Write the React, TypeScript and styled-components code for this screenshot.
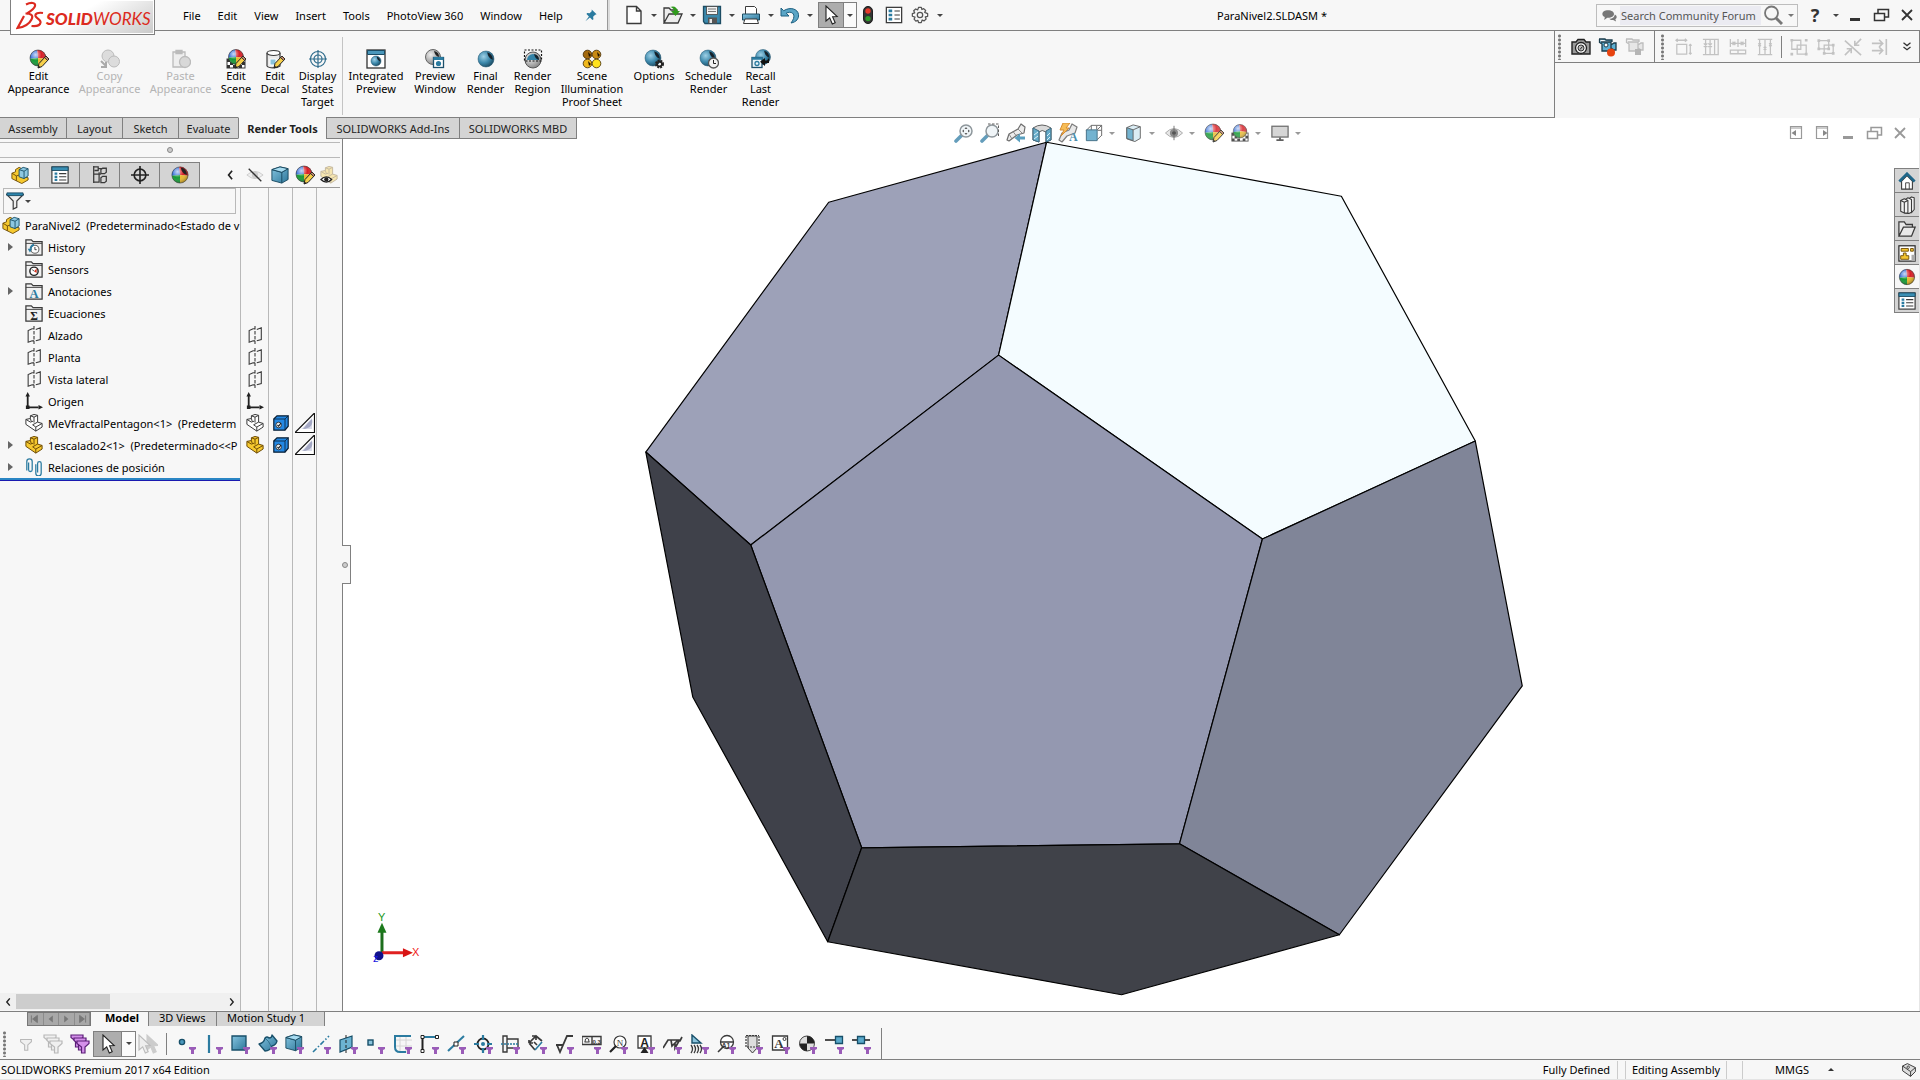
import React from 'react';
import styled, { createGlobalStyle, css } from 'styled-components';

const GlobalStyle = createGlobalStyle`
  * { box-sizing: border-box; }
  body { margin: 0; background: #f7f7f7; }
  body, button, input { font-family: "Noto Sans", "Open Sans", sans-serif; font-size: 11px; color: #000; }
  button { margin: 0; padding: 0; border: 0; background: none; white-space: nowrap; }
  ul { margin: 0; padding: 0; list-style: none; }
  svg { display: block; flex: none; }
`;

const line = '#808080';
const softLine = '#b9b9b9';
const face = '#f7f7f7';
const tabFace = '#d4d4d4';

/* ---------- icons ---------- */

const D = '#3a3a3a';
const B = '#2b7ba0';
const G = '#c2c2c2';

const Ball = ({ cx = 10, cy = 10, r = 8 }: { cx?: number; cy?: number; r?: number }) => (
  <g>
    <path d={`M${cx} ${cy}L${cx - r * 0.1} ${cy - r}A${r} ${r} 0 0 0 ${cx - r} ${cy + r * 0.1}Z`} fill="#2f6bd8" />
    <path d={`M${cx} ${cy}L${cx - r * 0.1} ${cy - r}A${r} ${r} 0 0 1 ${cx + r} ${cy + r * 0.1}Z`} fill="#d81f26" />
    <path d={`M${cx} ${cy}L${cx - r} ${cy + r * 0.1}A${r} ${r} 0 0 0 ${cx} ${cy + r}Z`} fill="#169a36" />
    <path d={`M${cx} ${cy}L${cx + r} ${cy + r * 0.1}A${r} ${r} 0 0 1 ${cx} ${cy + r}Z`} fill="#e9b92c" />
    <circle cx={cx} cy={cy} r={r} fill="url(#gloss)" stroke="#333" strokeWidth=".6" />
  </g>
);
const BlueBall = ({ cx = 10, cy = 10, r = 8 }: { cx?: number; cy?: number; r?: number }) => (
  <g>
    <circle cx={cx} cy={cy} r={r} fill="url(#blueBall)" stroke="#1d516c" strokeWidth=".5" />
    <path d={`M${cx + r * 0.15} ${cy - r * 0.85}Q${cx + r * 0.8} ${cy - r * 0.7} ${cx + r * 0.85} ${cy + r * 0.1}Q${cx + r * 0.25} ${cy - r * 0.1} ${cx + r * 0.15} ${cy - r * 0.85}z`} fill="#16222b" />
  </g>
);
const Pencil = () => (
  <g>
    <path d="M9 19l1-4.5 7-7.5 3 3-7 7.5z" fill="#f6cf4a" stroke="#222" strokeWidth="1" />
    <path d="M17 7l3 3-1.5 1.5-3-3z" fill="#b9856a" stroke="#222" strokeWidth=".8" />
    <path d="M9 19l.6-2.4 1.8 1.7z" fill="#222" />
  </g>
);
const Folder = ({ children }: { children?: React.ReactNode }) => (
  <g>
    <path d="M1 19V2h6l2 2h10v15z" fill="#f1f1f1" stroke={D} strokeWidth="1.4" />
    <path d="M1 6h18" stroke={D} strokeWidth="1" />
    {children}
  </g>
);
const PartShape = ({ fill = '#f6c92f', stroke = '#6d4b05' }: { fill?: string; stroke?: string }) => (
  <g fill={fill} stroke={stroke} strokeWidth="1.1" strokeLinejoin="round">
    <path d="M1 6l5-1V2l4-1.500 4 1V9l5 1.500v4L12 19 1 11.500z" />
    <path d="M1 6l5 3 3-1M6 2l4 1.500 4-2M10 3.500v6M6 5l1 3.500M12 19v-4.500l7-4M12 14.500L8.500 12l5.500-3" fill="none" />
  </g>
);
const AsmShape = () => (
  <g strokeLinejoin="round">
    <path d="M1 8l4-1.500V4l4-2.500 3 1.500v9l7 1v2.500L12 19.500 1 14z" fill="#f6c92f" stroke="#6d4b05" />
    <path d="M1 8l5 3v5.500M6 11l3-1" fill="none" stroke="#6d4b05" />
    <path d="M9 4l4.500-2.500L19 3v8l-4.500 3L9 12z" fill="#8ec8e2" stroke="#174f69" />
    <path d="M9 4l5.500 1.800L19 3M14.500 5.800V14" fill="none" stroke="#174f69" />
  </g>
);
const Cube = ({ tone = 'url(#blueFace)' }: { tone?: string }) => (
  <g stroke="#15455c" strokeLinejoin="round">
    <path d="M1 4l9-3 9 2v12l-7 4-11-3z" fill={tone} />
    <path d="M1 4l11 3 7-4M12 7v12" fill="none" />
    <path d="M1 4l9-3 9 2-7 4z" fill="#a7dbf0" />
  </g>
);
const Cursor = ({ fill = '#fff', stroke = '#222' }: { fill?: string; stroke?: string }) => (
  <path d="M5 1v15l3.700-3.200L11.300 19l2.900-1.200-2.600-6 4.600-.3z" fill={fill} stroke={stroke} strokeWidth="1.100" />
);
const Funnel = () => <path d="M12 13h7v2l-2 1v4h-3v-4l-2-1z" fill="#9a5cb8" />;
const BigFunnel = ({ x = 0, y = 0, fill = '#f0f0f0', stroke = '#b8b8b8' }) => (
  <path transform={`translate(${x} ${y})`} d="M1 1h12v2.500L9 7v6H5.500V7L1 3.500z" fill={fill} stroke={stroke} strokeWidth="1.200" />
);
const Plane = () => (
  <g fill="none" stroke={D}>
    <path d="M8 3L3.500 5v13L8 16.500M8 3h2M12 4l5-2v13l-5 1.500M8 16.500h2" strokeWidth="1.200" />
    <path d="M10 0v20" strokeDasharray="4 1.500" strokeWidth="1.200" />
  </g>
);
const VideoBody = ({ c, s }: { c: string; s: string }) => (
  <path d="M1 2h6l1 1h6v2M3 5h10v9H4V7L1.500 5.500V2M13 8l3-2h2v7h-2l-3-2z" fill={c} stroke={s} strokeWidth="1.300" />
);
const Lens = () => (
  <g>
    <path d="M2 18l6-6" stroke="#4a8db0" strokeWidth="3.600" strokeLinecap="round" />
    <circle cx="12" cy="8" r="6" fill="#eef4f7" stroke="#7b858b" strokeWidth="1.500" />
  </g>
);
const ListShape = () => (
  <g>
    <rect x="1.500" y="1.500" width="17" height="17" fill="#fff" stroke={D} strokeWidth="1.400" />
    <path d="M4 5.500h4M4 10h4M4 14.500h4" stroke={B} strokeWidth="3" />
    <path d="M10.500 5.500h6M10.500 10h6M10.500 14.500h6" stroke={D} strokeWidth="1.200" />
  </g>
);
const Checker = () => (
  <g>
    <rect x="1" y="10" width="18" height="9" fill="#fff" stroke={D} />
    <path d="M1 10h3v3H1zM4 13h3v3H4zM1 16h3v3H1zM7 16h3v3H7zM13 16h3v3h-3zM16 13h3v3h-3zM13 10h3v3h-3z" fill="#333" />
  </g>
);

const icons: Record<string, React.ReactNode> = {
  pin: <path d="M11 2l7 7-2 .5-3 3 .5 3.500-1.500 1-3.500-3.500L2 19l5-7-3.500-3.500 1-1.500 3.500.5 3-3z" fill={B} />,
  newDoc: <path d="M3 1.500h9.500l4.500 4.500v12.500H3zM12.500 1.500V6H17" fill="#fdfdfd" stroke={D} strokeWidth="1.400" />,
  open: (
    <g>
      <path d="M1 18V3h5l2 2h6v4M1 18l5-9h13l-4 9z" fill="#ededed" stroke={D} strokeWidth="1.300" />
      <path d="M7 2c4-1.500 7 0 7.500 4H17l-4.500 5L8 6h3c0-2-1.500-3.500-4-4z" fill="#2f9a1c" />
    </g>
  ),
  save: (
    <g>
      <path d="M1.500 1.500h17v17H3l-1.500-2z" fill="#3b89ac" stroke="#1c4c63" strokeWidth="1.300" />
      <rect x="4.500" y="1.500" width="11" height="8" fill="#f2f2f2" stroke="#444" strokeWidth=".8" />
      <path d="M6 4h8M6 6.500h8" stroke="#777" />
      <path d="M6 12.500h9v6H6z" fill="#555" /><path d="M7.500 14h2.500v4H7.500z" fill="#e7e7e7" />
    </g>
  ),
  print: (
    <g>
      <path d="M4.500 1.500h9l2 2v6h-11z" fill="#fff" stroke={D} />
      <path d="M1.500 9h17v6h-17z" fill="url(#blueFace)" stroke="#1c4c63" />
      <path d="M4 14h12l1.500 4.500h-15z" fill="#fff" stroke={D} />
    </g>
  ),
  undo: <path d="M1 3v8h8L6.200 8.200c5-2.500 9 .3 7.300 5.300-.5 1.800-1.500 3-2.500 4.500 5.500-1 8-4.500 7.500-8.500C17.800 4 10.500 1.500 3.700 5.700z" fill="#5aa5c6" stroke="#1c5f80" strokeWidth="1" />,
  cursor: <Cursor />,
  traffic: (
    <g>
      <rect x="5" y=".5" width="10" height="19" rx="5" fill="#333" stroke="#111" />
      <circle cx="10" cy="5.500" r="3" fill="#e8392a" /><circle cx="10" cy="14" r="3" fill="#2f9c2b" />
    </g>
  ),
  list: <ListShape />,
  gear: (
    <g fill="none" stroke="#555" strokeWidth="1.400">
      <circle cx="10" cy="10" r="3" />
      <path d="M8.500 1.500h3l.6 2.400 2-1 2.200 2-1.100 2.200 3.300 1.400v3l-2.600.7.9 2.200-2.200 2.100-2.200-1-1 3h-3l-.8-2.600-2.200.9-2-2.200 1-2.200-2.900-1v-3l2.600-.8L3 5.300l2.200-2 2.200 1z" strokeLinejoin="round" />
    </g>
  ),
  bubbles: (
    <g fill="#777">
      <path d="M8 3c5 0 8 2.200 8 5s-3 5-8 5l-1-.1L3 16l.7-4C1.500 11 .5 9.800.500 8 .5 5 3.500 3 8 3z" />
      <path d="M17 8.500c3 1 3.500 5 .8 6.500l1 3-4-2c-2.500.3-4-.5-5-1.800 4.500 0 7.200-2.700 7.200-5.700z" />
    </g>
  ),
  magnifier: <g fill="none" stroke="#777"><circle cx="8.500" cy="8" r="6.500" strokeWidth="1.800" /><path d="M13 13l6 6" strokeWidth="3" /></g>,
  minimize: <path d="M5 14.500h10" stroke="currentColor" strokeWidth="3" />,
  restore: <path d="M7 8V4.500h10.500V12H14M3.500 8.500h10v7h-10z" fill="none" stroke="currentColor" strokeWidth="1.500" />,
  close: <path d="M5 5l10 10M15 5L5 15" stroke="currentColor" strokeWidth="1.800" />,
  dockLeft: <g><path d="M4.500 3.500h11v12h-11zM4 5h12" fill="none" stroke="#999" strokeWidth="1.200" /><path d="M10 7v6L5.500 10z" fill="#888" /></g>,
  dockRight: <g><path d="M4.500 3.500h11v12h-11zM4 5h12" fill="none" stroke="#999" strokeWidth="1.200" /><path d="M11 7v6l4.500-3z" fill="#888" /></g>,
  appearance: <g><Ball cx={9} cy={9} /><Pencil /></g>,
  copyAppearance: (
    <g fill="#dcdcdc" stroke="#bbb"><circle cx="8" cy="7" r="6" /><circle cx="14" cy="12.500" r="5.500" /><path d="M1 12l5 5m0-4v5H1" fill="none" stroke="#aaa" strokeWidth="2" /></g>
  ),
  pasteAppearance: <g fill="#eee" stroke="#bbb" strokeWidth="1.300"><path d="M2 3h12v15H2zM5 1.500h6v3H5z" /><circle cx="14" cy="13" r="5.500" fill="#d8d8d8" /></g>,
  scene: <g><Checker /><Ball cx={10} cy={8} r={7.5} /><Pencil /></g>,
  sceneBall: <g><Checker /><Ball cx={10} cy={8} r={7.5} /></g>,
  decal: (
    <g>
      <path d="M2 4v13c2 2.500 10 2.500 13 0V4" fill="#eaeaea" stroke={D} strokeWidth="1.200" />
      <ellipse cx="8.500" cy="4" rx="6.500" ry="2.500" fill="#fff" stroke={D} strokeWidth="1.200" />
      <path d="M5 10h6v6H5z" fill="#8ac3dc" stroke="#fff" /><Pencil />
    </g>
  ),
  target: <g fill="none" stroke="#2f6c8c" strokeWidth="1.200"><circle cx="10" cy="10" r="7.500" /><circle cx="10" cy="10" r="4" /><path d="M10 1v18M1 10h18" /></g>,
  integrated: (
    <g><rect x="1" y="1" width="18" height="18" fill="#fff" stroke="#333" strokeWidth="1.300" /><path d="M1.500 1.500h17v4h-17z" fill="#4a97bb" stroke="#1c4c63" /><BlueBall cy={12} r={5} /></g>
  ),
  previewWin: (
    <g><circle cx="8" cy="8" r="7.500" fill="url(#greyBall)" stroke="#666" /><path d="M9 2a6 6 0 0 1 5 6q-4-1-5-6z" fill="#222" /><rect x="8.500" y="8.500" width="10" height="10" fill="#fff" stroke="#1d516c" strokeWidth="1.300" /><path d="M8.500 9.500h10" stroke="#2b7ba0" strokeWidth="3" /><circle cx="13.500" cy="14.500" r="2.600" fill="#2b7ba0" /></g>
  ),
  blueBall: <BlueBall />,
  region: (
    <g><circle cx="10" cy="11" r="8" fill="url(#greyBall)" stroke="#555" /><path d="M4 11a6 6 0 0 1 12 0z" fill="#3483a7" /><path d="M11 5a6 6 0 0 1 5 6q-4-1-5-6z" fill="#16222b" /><rect x="1.500" y="1" width="17" height="11" fill="none" stroke="#111" strokeDasharray="2 1.500" strokeWidth="1.200" /></g>
  ),
  proof: (
    <g stroke="#3d2600" strokeWidth=".8"><circle cx="5.500" cy="5.500" r="4.300" fill="#a46a0e" /><circle cx="14.500" cy="5.500" r="4.300" fill="#c98a14" /><circle cx="5.500" cy="14.500" r="4.300" fill="#f0b81c" /><circle cx="14.500" cy="14.500" r="4.300" fill="#ffe21f" /><path d="M6 3l3 3-2 2zM15 3l3 3-2 2zM6 12l3 3-2 2z" fill="#221400" stroke="none" /></g>
  ),
  options: <g><BlueBall cx={9} cy={9} /><circle cx="15.500" cy="15" r="3.200" fill="none" stroke="#222" strokeWidth="2.600" strokeDasharray="1.700 .9" /><circle cx="15.500" cy="15" r="2.400" fill="none" stroke="#222" strokeWidth="1.600" /></g>,
  schedule: <g><BlueBall cx={9} cy={9} /><circle cx="14.500" cy="14" r="5" fill="#f2f2f2" stroke="#555" strokeWidth="1.300" /><path d="M14.500 11v3.500H17" fill="none" stroke="#222" /></g>,
  recall: (
    <g><BlueBall cx={12} cy={8} r={7.5} /><rect x="1" y="8.500" width="10" height="10" fill="#eaf4f9" stroke="#1d516c" strokeWidth="1.300" /><path d="M1 9.500h10" stroke={B} strokeWidth="2.500" /><circle cx="6" cy="14.500" r="2" fill="none" stroke={B} strokeWidth="1.300" /><path d="M18 9v5h-4v3l-5-4.200 5-3.800v2.500h2z" fill="#111" /></g>
  ),
  camera: (
    <g><path d="M1 5h4l2-2.500h6L15 5h4v12H1z" fill="#9a9a9a" stroke="#222" strokeWidth="1.400" /><circle cx="10" cy="11" r="5.500" fill="#f4f4f4" stroke="#222" strokeWidth="1.300" /><circle cx="10" cy="11" r="3" fill="#bbb" stroke="#333" /><path d="M9 12.500l2.500-3" stroke="#222" /></g>
  ),
  video: <g><VideoBody c="#5fb0d2" s="#1c3d4c" /><circle cx="8" cy="8" r="2" fill="#fff" stroke="#1c3d4c" /><circle cx="13" cy="15.500" r="4" fill="#e8430f" /></g>,
  videoOff: <g><VideoBody c="#e6e6e6" s="#bdbdbd" /><path d="M10 12h6v6h-6z" fill="#b5b5b5" /></g>,
  al1: <g fill="none" stroke={G} strokeWidth="1.400"><path d="M2 7h11v11H2zM1 2.500h12M3 .8L1 2.500l2 1.700M11 .8l2 1.700-2 1.700M17 7v11M15.500 8.500L17 7l1.500 1.500M15.500 16.500L17 18l1.500-1.500" /></g>,
  al2: <g fill="none" stroke={G} strokeWidth="1.400"><path d="M1 1.500h13v17H1M14 1.500h4v17h-4M4 2v16M9 2v16M2 6l4 4M6 6l-4 4M7 6l4 4M11 6l-4 4" /></g>,
  al3: <g fill="none" stroke={G} strokeWidth="1.400"><path d="M1.500 1v9M18.500 1v9M10 1v9M2 6h16M4 4l3 4M7 4L4 8M13 4l3 4M16 4l-3 4M1.500 13.500h17v4h-17zM10 13.500v4" /></g>,
  al4: <g fill="none" stroke={G} strokeWidth="1.400"><path d="M2 1.500h16M2 18.500h16M4 2v16M10 2v16M16 2v16M2.500 6l3 3M5.500 6l-3 3M8.500 10l3 3M11.500 10l-3 3M14.500 6l3 3M17.500 6l-3 3" /></g>,
  al5: <g fill="none" stroke={G} strokeWidth="1.400"><path d="M2 2.500h10v10H2zM8 8h10v10H8z" /><path d="M.5 1h3v3h-3zM16.500 16.500h3v3h-3zM.5 16.500h3v3h-3zM16.500 1h3v3h-3z" fill={G} stroke="none" /></g>,
  al6: <g fill="none" stroke={G} strokeWidth="1.400"><path d="M2 3h11v9H2zM8 8h10v9H8z" /><path d="M.5 1.500h3v3h-3zM11.500 1.500h3v3h-3zM.5 10.500h3v3h-3zM11.500 10.500h3v3h-3zM16.500 15.500h3v3h-3zM6.500 15.500h3v3h-3zM16.500 6.500h3v3h-3z" fill={G} stroke="none" /></g>,
  al7: <g stroke={G} strokeWidth="1.800" fill="none"><path d="M1 3l18 16M19 1l-7 7M12 3v5h5M1 19l7-7M8 17v-5H3" /></g>,
  al8: <g stroke={G} strokeWidth="1.800" fill="none"><path d="M1 6h12M9 2l4 4-4 4M1 14h12M9 10l4 4-4 4M17 1v18" /></g>,
  more: <path d="M5 4l5 4 5-4M5 10l5 4 5-4" fill="none" stroke="#333" strokeWidth="1.800" />,
  zoomFit: <g><Lens /><path d="M12 4l1.500 2h-3zM12 12l1.500-2h-3zM8 8l2-1.500v3zM16 8l-2-1.500v3z" fill="#444" /></g>,
  zoomArea: <g><Lens /><path d="M8 1h10.500v13" fill="none" stroke="#444" strokeDasharray="2.500 1.500" /></g>,
  prevView: <g strokeLinejoin="round"><path d="M1 17l2-6 9-5 3-5 4 3-1 6-7 2-8 6z" fill="#e9e9e9" stroke="#555" strokeWidth="1.200" /><path d="M12 6l4 4M3 11l3 5M7 8.500l3 4" stroke="#777" /><path d="M19 16.500h-5v3L8.500 15 14 10.500v3h5z" fill="#3d8fb5" /></g>,
  section: <g stroke="#444" strokeLinejoin="round"><path d="M1 5Q10-1 19 5v12l-5 2V9q-4-3-7 0v10l-6-2z" fill="#d4d4d4" /><path d="M1 5l6 3v11l-6-2zM19 5l-5 3v11l5-2z" fill="#4b9dc0" stroke="#1d516c" /><path d="M2 12l4-3M2 16l4-3M15 13l3-3M15 17l3-3" stroke="#d5eef8" /></g>,
  annView: <g strokeLinejoin="round"><path d="M1 17l3-7 7-3 3-6 5 3-2 6-8 3-5 6z" fill="#e4e4e4" stroke="#666" strokeWidth="1.200" /><path d="M12 0H5L2 7h4l-3 6 8-8H8z" fill="#f6b23a" stroke="#cf7a10" /><text x="11" y="18" fontSize="12" fontWeight="700" fill={B} fontFamily="Liberation Serif, serif">A</text></g>,
  orient: <g fill="none" stroke="#444"><path d="M7 1.500h11.500V13M7 1.500v5M18.500 1.500l-5 5M13 2v4M18 7h-4M7 1.500L1.500 7M18.500 12.500l-5 5" /><path d="M1.500 6.500h12v12h-12z" fill="#5ba6c8" stroke="#1d516c" /></g>,
  display: <g stroke="#444" strokeLinejoin="round"><path d="M2 4l7-3 8 2v13l-6 3.500-9-3z" fill="#d5ebf4" /><path d="M2 4l7 2.500v12L2 16z" fill="#5ba6c8" /><path d="M9 6.500L17 3" fill="none" /></g>,
  eye: <g><path d="M.5 10Q10 0 19.500 10 10 20 .5 10z" fill="#e2e2e2" stroke="#999" /><circle cx="10" cy="10" r="4.500" fill="#777" /><circle cx="10" cy="10" r="2" fill="#222" /><path d="M10 2v16" stroke="#555" /></g>,
  monitor: <g><rect x="1" y="2.500" width="18" height="12" fill="#cfcfcf" stroke="#555" strokeWidth="1.400" /><path d="M10 15v3M6 18h8" stroke="#444" strokeWidth="2" /></g>,
  asm: <AsmShape />,
  part: <PartShape />,
  partGrey: <PartShape fill="#fff" stroke="#3a3a3a" />,
  props: <g><rect x="1" y="1" width="18" height="18" fill="#fff" stroke={D} strokeWidth="1.300" /><path d="M1 1h18v4H1z" fill="#3a8fb4" stroke="#1c4c63" /><path d="M4 8.500h3M4 12h3M4 15.500h3" stroke={B} strokeWidth="2.400" /><path d="M9 8.500h8M9 12h8M9 15.500h8" stroke={D} strokeWidth="1.200" /></g>,
  config: <g fill="none" stroke={D} strokeWidth="1.400"><path d="M3 0v19M3 1h5v4H4M8 3h4M3 9h8M3 18h6V7M11 4l2-1.500h4V7l-2 1.500h-4zM11 13l2-1.500h4V17l-2 1.500h-4z" /></g>,
  cross: <g fill="none" stroke="#222" strokeWidth="1.800"><circle cx="10" cy="10" r="6.500" /><path d="M10 0v20M0 10h20" /></g>,
  ball: <g><Ball r={9} /><path d="M11 2c4 0 7 4 6.500 8-4-1-6-4-6.500-8z" fill="#222" /></g>,
  sphere: <Ball r={8.5} />,
  chevronLeft: <path d="M13 4l-5 6 5 6" fill="none" stroke="#222" strokeWidth="2.400" />,
  chevronRight: <path d="M7 4l5 6-5 6" fill="none" stroke="#222" strokeWidth="2.400" />,
  eyeOff: <g><path d="M1 10Q10 2 19 10 10 18 1 10z" fill="#eee" stroke="#c9c9c9" /><circle cx="10" cy="10" r="3.500" fill="#ccc" /><path d="M3 3l14 14" stroke="#333" strokeWidth="1.500" /></g>,
  cube: <Cube />,
  ghost: <g><g opacity=".35"><PartShape /></g><path d="M1 15q6-6 12 0-6 6-12 0z" fill="#fff" stroke="#222" strokeWidth="1.300" /><circle cx="7" cy="15" r="2.400" fill="#222" /></g>,
  filter: <g><path d="M1 3l7 7v9l4-2v-7l7-7z" fill="#eee" stroke={D} strokeWidth="1.300" /><path d="M1 1h18v3H1z" fill="#2d86ad" stroke="#1c4c63" /></g>,
  history: <Folder><circle cx="11" cy="12.500" r="4.500" fill="#fff" stroke="#666" strokeWidth="1.200" /><path d="M11 10v3h2" fill="none" stroke="#333" /><path d="M3 12h5l-2.500 4z" fill={B} /><path d="M6 12q1-4 4-4.500" fill="none" stroke={B} strokeWidth="2" /></Folder>,
  sensors: <Folder><circle cx="10" cy="12.500" r="4.600" fill="#fff" stroke="#222" strokeWidth="1.600" /><path d="M10 12.500l3-3v5z" fill="#d8321f" /><path d="M10 12.500l-2-2" stroke="#222" /></Folder>,
  annotations: <Folder><text x="10" y="17.500" fontSize="14" fontWeight="700" textAnchor="middle" fill={B} fontFamily="Liberation Serif, serif">A</text></Folder>,
  equations: <Folder><text x="10" y="17.500" fontSize="13" fontWeight="700" textAnchor="middle" fill="#222" fontFamily="Liberation Serif, serif">Σ</text></Folder>,
  plane: <Plane />,
  origin: <g fill="#222"><path d="M3 4v13h12" fill="none" stroke="#222" strokeWidth="2" /><path d="M3 0l2.500 5h-5zM20 17l-5 2.500v-5zM1 15h4v4H1z" /></g>,
  mates: <g fill="none" stroke={B} strokeWidth="1.400"><path d="M2 14V4a3 3 0 0 1 6 0v9a2 2 0 0 1-4 0V5M12 7v10a3 3 0 0 0 6 0V6a2 2 0 0 0-4 0v10" /></g>,
  dispCube: <g><path d="M1 5l4-4h14v13l-4 5H1z" fill="#2288e4" stroke="#0a1f33" strokeWidth="1.500" /><path d="M1 5h14v14M15 5l4-4" fill="none" stroke="#0a1f33" /><circle cx="7" cy="12.500" r="3.500" fill="#dfe8ef" stroke="#222" /><path d="M5.500 12.500l1.500 1.500 3-4" fill="none" stroke="#111" strokeWidth="1.300" /></g>,
  corner: <g><path d="M19 1v18H1z" fill="#fff" /><path d="M17 5v11H6q1.500-1 2.500-2z" fill="#d9dbe8" /><path d="M17 6q2 9-9 10c2-2 6-8 9-10z" fill="#a4a8c4" /><path d="M19.500 0v19.500H0z" fill="none" stroke="#111" strokeWidth="1.200" /></g>,
  home: <g><path d="M4 10v9h12v-9l-6-6z" fill="#fff" stroke={D} strokeWidth="1.200" /><path d="M1.500 10.500L10 2l8.500 8.500" fill="none" stroke="#1f6689" strokeWidth="3" /><path d="M8.500 19v-7h4v7" fill="none" stroke={D} /></g>,
  books: <g fill="#f4f4f4" stroke={D} strokeWidth="1.200" strokeLinejoin="round"><path d="M12 3l3-2 3 1v13l-3 3.500-3-1z" /><path d="M8 4l3-2 4 2v14l-3 1.500-4-1z" /><path d="M3 5l4-2 4 2v14L7 19l-4-2z" /><path d="M3 5l4 2v12M7 7l4-2" fill="none" /></g>,
  folderOpen: <path d="M1 18V2h6l2 3h7v3M1 18L6 8h13l-4 10z" fill="#e9e9e9" stroke={D} strokeWidth="1.400" />,
  palette: <g><rect x="1" y="2" width="18" height="17" fill="#fff" stroke="#222" strokeWidth="1.300" /><path d="M3.500 5h8v3h-8zM14 5h3v3h-3zM6 10h3v3h3v4H3v-4h3z" fill="#f4c530" stroke="#6d4b05" /><path d="M15 12h4v7h-4z" fill="#aaa" /></g>,
  first: <path d="M4 4v12M14 4v12L6 10z" fill="#777" stroke="#777" strokeWidth="1.500" />,
  back: <path d="M13 4v12L6 10z" fill="#777" />,
  forward: <path d="M7 4v12l7-6z" fill="#777" />,
  last: <path d="M16 4v12M6 4v12l8-6z" fill="#777" stroke="#777" strokeWidth="1.500" />,
  filterOne: <BigFunnel x={3} y={4} />,
  filterMany: <g><BigFunnel x={0} y={0} /><BigFunnel x={3} y={3} /><BigFunnel x={6} y={6} /></g>,
  filterOn: <g><BigFunnel x={0} y={0} fill="#d490ea" stroke="#5c1f78" /><BigFunnel x={3} y={3} fill="#d490ea" stroke="#5c1f78" /><BigFunnel x={6} y={6} fill="#d490ea" stroke="#5c1f78" /></g>,
  cursorOff: <g><g transform="translate(4 0)"><Cursor fill="#ccc" stroke="#ccc" /></g><g transform="translate(-4 0)"><Cursor fill="#eee" stroke="#bbb" /></g></g>,
  fPoint: <g><circle cx="5" cy="8" r="2.600" fill="#4a98bd" stroke="#174f69" strokeWidth="1.400" /><Funnel /></g>,
  fEdge: <g><path d="M5 1v18" stroke={B} strokeWidth="2.200" /><Funnel /></g>,
  fFace: <g><path d="M1 2h14v14H1z" fill="url(#blueFace)" stroke="#174f69" strokeWidth="1.300" /><Funnel /></g>,
  fSurf: <g strokeLinejoin="round"><path d="M1 10q5-1 6-6 2-2 4 0 3 0 3-3l5 6q-1 4-5 5-2 5-7 5z" fill="url(#blueFace)" stroke="#174f69" strokeWidth="1.300" /><path d="M7 4q4 3 6 8" fill="none" stroke="#174f69" strokeWidth=".6" /><Funnel /></g>,
  fBody: <g><g transform="scale(.88)"><Cube /></g><Funnel /></g>,
  fAxis: <g><path d="M1 18L17 2" stroke={B} strokeWidth="1.600" strokeDasharray="5 2 1.500 2" /><Funnel /></g>,
  fPlane: <g><path d="M1 6l12-4v11L1 18z" fill="#6cb3d2" stroke="#174f69" strokeWidth="1.200" /><path d="M7 1v19" stroke="#222" strokeDasharray="3 2" /><Funnel /></g>,
  fSketchPt: <g><rect x="2" y="6" width="5" height="5" fill="#8ac3dc" stroke="#174f69" strokeWidth="1.400" /><Funnel /></g>,
  fSketch: <g><path d="M1 6h18M1 12h18M7 1v18M13 1v18" stroke="#d4d4d4" /><path d="M18 2H2v11q0 5 5 5h6" fill="none" stroke={B} strokeWidth="2" /><Funnel /></g>,
  fSeg: <g><path d="M2.500 4v13" stroke="#222" strokeWidth="2" /><path d="M3 3h14" stroke={B} strokeWidth="2" /><g fill="#fff" stroke="#222"><path d="M1 1.500h3v3H1zM15.500 1.500h3v3h-3zM1 15.500h3v3H1z" /></g><Funnel /></g>,
  fMid: <g><path d="M1 17L17 2" stroke={B} strokeWidth="2" /><path d="M7 8h4v4H7z" fill="#fff" stroke="#222" /><Funnel /></g>,
  fCenter: <g><circle cx="9" cy="10" r="5.500" fill="none" stroke="#222" strokeWidth="1.800" /><path d="M9 1v5M9 14v5M0 10h5M13 10h5" stroke={B} strokeWidth="2.200" /><circle cx="9" cy="10" r="2" fill={B} /><Funnel /></g>,
  fCline: <g fill="none" stroke={D} strokeWidth="1.400"><path d="M2 2h4v16H2zM6 5h11v9H6" /><path d="M0 10h18" stroke={B} strokeDasharray="2 1" /><g stroke="none"><Funnel /></g></g>,
  fDim: <g fill="none" stroke={D} strokeWidth="1.700"><path d="M1 9l7-7 6 5M1 9v-3M1 9h4M8 2v4M8 2H4M1 9l6 7M6 8l3 3" /><path d="M7 16l7-8" stroke={B} /><g stroke="none"><Funnel /></g></g>,
  fFinish: <g><path d="M1 11h7M2 11l3 7 7-16h6" fill="none" stroke={D} strokeWidth="1.800" /><Funnel /></g>,
  fTol: <g><path d="M0 2.500h19v8H0zM10 2.500v8" fill="none" stroke={D} strokeWidth="1.400" /><path d="M2.500 8h5M3 8q0-4 2-4t2 4" fill="none" stroke={D} /><text x="10.500" y="9.500" fontSize="6" fontWeight="700" fill={D} fontFamily="Liberation Sans, sans-serif">0.3</text><Funnel /></g>,
  fNote: <g><circle cx="11" cy="8" r="6" fill="#fff" stroke={D} strokeWidth="1.200" /><path d="M7 12l-6 6" stroke="#222" strokeWidth="2.200" /><text x="11" y="11.500" fontSize="9" textAnchor="middle" fill={D} fontFamily="Liberation Serif, serif">N</text><Funnel /></g>,
  fDatum: <g><path d="M2 2h13v12H2z" fill="#fff" stroke={D} strokeWidth="1.300" /><path d="M8.500 13l4 6h-8z" fill="#222" /><text x="8.500" y="12.500" fontSize="12" fontWeight="700" textAnchor="middle" fill="#222" fontFamily="Liberation Sans, sans-serif">A</text><Funnel /></g>,
  fWeld: <g><path d="M0 14l5-8h3l1 6 5-5h3l2-4M6 6h12M12 9v5l4-7" fill="none" stroke={D} strokeWidth="1.700" /><Funnel /></g>,
  fBead: <g><path d="M2 1v8h9z" fill="#8ac3dc" stroke="#174f69" strokeWidth="1.400" /><path d="M1 11q3 4 0 8M4 11q3 4 0 8M7 11q3 4 0 8M10 11q3 4 0 8" fill="none" stroke={D} strokeWidth="1.300" /><Funnel /></g>,
  fDatumT: <g><circle cx="10" cy="8" r="6.500" fill="#fff" stroke={D} strokeWidth="1.300" /><path d="M3 8h14M6 13l-5 5" stroke={D} strokeWidth="1.600" /><text x="9" y="14" fontSize="7" fontWeight="700" textAnchor="middle" fill={D} fontFamily="Liberation Sans, sans-serif">A1</text><Funnel /></g>,
  fThread: <g><path d="M4 2h9v12l-4.500 5L4 14z" fill="#ddd" stroke={D} /><path d="M2 1.500h13M2 2v11h13V2" fill="none" stroke={D} strokeDasharray="2 1" strokeWidth="1.200" /><Funnel /></g>,
  fBlock: <g><path d="M1.500 2h15v14h-15z" fill="#fff" stroke={D} strokeWidth="1.300" /><text x="8" y="14" fontSize="13" textAnchor="middle" fontWeight="700" fill={D} fontFamily="Liberation Serif, serif">A</text><circle cx="13.500" cy="5" r="1.500" fill="none" stroke={D} /><Funnel /></g>,
  fCog: <g><circle cx="9" cy="9.500" r="7.500" fill="#ddd" stroke="#444" /><path d="M9 9.500V2a7.500 7.500 0 0 1 7.500 7.500zM9 9.500V17a7.500 7.500 0 0 1-7.500-7.500z" fill="#222" /><Funnel /></g>,
  fConn: <g><path d="M0 6h10" stroke="#222" strokeWidth="1.600" /><path d="M10.500 2.500h7v7h-7z" fill="#5aa9cb" stroke="#174f69" strokeWidth="1.300" /><Funnel /></g>,
  fRoute: <g><path d="M0 6h18" stroke="#222" strokeWidth="1.600" /><path d="M5.500 2.500h7v7h-7z" fill="#5aa9cb" stroke="#174f69" strokeWidth="1.300" /><Funnel /></g>,
  tag: <g fill="#ddd" stroke={D} strokeWidth="1.200"><path d="M2 5l6-3 10 5v5l-6 6L2 11z" /><path d="M2 5l10 7 6-5M12 12v6" fill="none" /><circle cx="9" cy="6.500" r="1.500" fill="#fff" /></g>,
};

const Icon = ({ name, size = 20 }: { name: string; size?: number }) => (
  <svg width={size} height={size} viewBox="0 0 20 20" aria-hidden="true">{icons[name]}</svg>
);

const Defs = () => (
  <defs>
    <radialGradient id="gloss" cx=".35" cy=".3" r=".75"><stop offset="0" stopColor="#fff" stopOpacity=".75" /><stop offset=".5" stopColor="#fff" stopOpacity="0" /><stop offset="1" stopColor="#000" stopOpacity=".35" /></radialGradient>
    <radialGradient id="blueBall" cx=".35" cy=".35" r=".8"><stop offset="0" stopColor="#9ed0e6" /><stop offset=".5" stopColor="#3c88ab" /><stop offset="1" stopColor="#12384b" /></radialGradient>
    <radialGradient id="greyBall" cx=".35" cy=".35" r=".8"><stop offset="0" stopColor="#eee" /><stop offset="1" stopColor="#777" /></radialGradient>
    <linearGradient id="blueFace" x2="1" y2="1"><stop offset="0" stopColor="#84c4e0" /><stop offset="1" stopColor="#2d7699" /></linearGradient>
  </defs>
);

/* ---------- shared controls ---------- */

const Page = styled.div`display: flex; flex-direction: column; height: 100vh; overflow: hidden; background: ${face};`;

const ToolButton = styled.button<{ $w?: number }>`
  display: flex; align-items: center; justify-content: center; flex: none;
  width: ${p => p.$w ?? 22}px; height: 24px; color: #333;
`;
const Arrow = styled.button<{ $w?: number; $up?: boolean; $color?: string }>`
  display: flex; align-items: center; justify-content: center; flex: none;
  width: ${p => p.$w ?? 17}px; height: 24px;
  &::before {
    content: ""; border: 3px solid transparent;
    ${p => (p.$up ? css`border-top: 0; border-bottom: 3px solid #333;` : css`border-bottom: 0; border-top: 3px solid ${p.$color ?? '#444'};`)}
  }
`;
const Grip = styled.span`flex: none; width: 3px; height: 26px; background: radial-gradient(circle, #777 1px, transparent 2px) 0 0 / 3px 4px;`;
const Rule = styled.span<{ $h?: number; $c?: string }>`flex: none; width: 1px; height: ${p => p.$h ?? 22}px; background: ${p => p.$c ?? line};`;
const SelectBox = styled.span<{ $h: number }>`
  display: flex; align-items: center; flex: none; height: ${p => p.$h}px; border: 1px solid ${line};
  > :first-child { background: #adadad; height: 100%; }
  > :last-child { height: 100%; border-left: 1px solid ${line}; background: #fbfbfb; }
`;

/* ---------- title bar ---------- */

const TitleBar = styled.header`position: relative; display: flex; align-items: center; flex: none; height: 30px;`;
const Logo = styled.div`
  position: absolute; z-index: 2; left: 10px; top: -1px; display: flex; align-items: flex-start; gap: 2px;
  width: 145px; height: 36px; padding: 1px 5px; border: 1px solid ${line}; outline: 1px solid #fff; outline-offset: -2px;
  background: linear-gradient(150deg, #fff 45%, #c9c9c9);
`;
const LogoText = styled.span`padding-top: 8px; font: italic 400 17px/20px Lato, sans-serif; color: #dc2a20; b { font-weight: 900; }`;
const Menu = styled.nav`display: flex; align-items: center; flex: none; gap: 17px; width: 600px; padding-left: 183px; button:last-child { margin-left: auto; }`;
const DividerBar = styled.span`flex: none; width: 3px; height: 30px; margin-left: 7px; margin-right: 13px; border-left: 1px solid #999; background: #ddd;`;
const Group = styled.div<{ $gap?: number }>`display: flex; align-items: center; flex: none; gap: ${p => p.$gap ?? 0}px;`;
const DocTitle = styled.h1`flex: 1; margin: 0; font-size: 11px; font-weight: 400; text-align: center;`;
const Search = styled.label`display: flex; align-items: center; flex: none; width: 202px; height: 23px; padding-left: 5px; border: 1px solid #bdbdbd;`;
const SearchInput = styled.input`
  flex: 1; min-width: 0; height: 19px; margin-left: 3px; padding: 0 1px; border: 0; background: #ebebf2; outline: 0;
  &::placeholder { color: #555; opacity: 1; }
`;
const Help = styled.button`width: 24px; margin-left: 5px; font-size: 18px; line-height: 24px; font-weight: 700; color: #333;`;
const WinButtons = styled.div`display: flex; gap: 4px; padding-right: 2px;`;

/* ---------- ribbon ---------- */

const RibbonRow = styled.div`display: flex; flex: none; height: 88px;`;
const Ribbon = styled.div`display: flex; flex: 1; align-items: flex-start; gap: 10px; padding: 18px 8px 0; border: 1px solid ${line}; border-left: 0;`;
const RibbonButton = styled.button<{ $w: number }>`
  display: flex; flex-direction: column; align-items: center; flex: none; width: ${p => p.$w}px;
  line-height: 13px; white-space: pre; text-align: center; color: #000;
  &:disabled { color: #b4b4b4; }
`;
const RibbonRule = styled.span`flex: none; width: 1px; height: 78px; margin: -12px -4px 0; background: #c4c4c4;`;
const SideTools = styled.div`
  display: flex; align-items: center; flex: none; gap: 6px; width: 365px; height: 33px; padding-left: 3px;
  border: 1px solid ${line}; border-left: 0;
`;

/* ---------- feature panel ---------- */

const Main = styled.main`display: flex; flex: 1; min-height: 0;`;
const Side = styled.aside`position: relative; z-index: 1; display: flex; flex-direction: column; flex: none; width: 343px;`;
const Tabs = styled.nav`display: flex; flex: none; width: max-content; height: 22px; margin-top: -1px;`;
const Tab = styled.button<{ $w: number; $on?: boolean }>`
  width: ${p => p.$w}px; margin-left: -1px; border: 1px solid ${line}; background: ${tabFace}; color: #222;
  ${p => p.$on && css`background: ${face}; font-weight: 700; border-top-color: ${face}; border-bottom-color: ${face};`}
`;
const Panel = styled.div`display: flex; flex-direction: column; flex: 1; min-height: 0; background: ${face}; border-right: 1px solid ${line};`;
const PanelGrip = styled.div`
  display: flex; align-items: center; justify-content: center; flex: none; height: 16px; margin: 3px 2px 4px 0;
  border-top: 1px solid ${softLine}; border-bottom: 1px solid ${softLine};
`;
const Knob = styled.span`width: 6px; height: 6px; border: 1px solid #888; border-radius: 50%; background: #ccc;`;
const PanelTabs = styled.div`display: flex; flex: none; height: 26px; margin-right: 2px; border-bottom: 1px solid #999;`;
const PanelTab = styled.button<{ $on?: boolean }>`
  display: flex; align-items: center; justify-content: center; width: 40px; height: 26px;
  border: 1px solid ${line}; border-left: 0; background: ${p => (p.$on ? face : tabFace)};
  ${p => p.$on && css`border-bottom-color: ${face};`}
`;
const StateHeads = styled.div`display: flex; align-items: center; margin-left: auto;`;
const PanelBody = styled.div`display: flex; flex: 1; min-height: 0;`;
const TreeArea = styled.div`display: flex; flex-direction: column; flex: none; width: 240px; overflow: hidden;`;
const FilterBox = styled.label`display: flex; align-items: center; flex: none; height: 26px; margin: 0 4px 0 3px; padding-left: 2px; border: 1px solid ${softLine};`;
const FilterInput = styled.input`flex: 1; min-width: 0; border: 0; outline: 0; background: none;`;
const Tree = styled.ul`border-bottom: 2px solid #2a86c4; box-shadow: 0 1px #1a1ab0;`;
const TreeRow = styled.li<{ $root?: boolean }>`
  display: flex; align-items: center; height: 22px; gap: 5px; padding-left: ${p => (p.$root ? 2 : 8)}px; white-space: pre;
`;
const Expander = styled.button<{ $open: boolean }>`
  flex: none; width: 12px; height: 12px; visibility: ${p => (p.$open ? 'visible' : 'hidden')};
  &::before { content: ""; display: block; width: 0; border: 4px solid transparent; border-left: 5px solid #666; border-right: 0; }
`;
const StateCol = styled.ul<{ $w: number }>`
  flex: none; width: ${p => p.$w}px; padding-top: 26px; border-left: 1px solid ${softLine};
  li { display: flex; align-items: center; justify-content: center; height: 22px; }
`;
const HScroll = styled.div`display: flex; align-items: center; flex: none; height: 17px; margin: auto 0 1px; background: #f0f0f0; button:last-child { margin-left: auto; }`;
const Thumb = styled.span`width: 94px; height: 15px; background: #cdcdcd;`;
const SplitHandle = styled.button`
  position: absolute; left: 342px; top: 427px; display: flex; align-items: center; width: 9px; height: 39px;
  border: 1px solid ${line}; border-left: 0; background: ${face};
`;

/* ---------- viewport ---------- */

const Viewport = styled.section`
  display: grid; flex: 1; min-width: 0; min-height: 0; background: #fff; border-right: 1px solid #e6e6e6;
  > * { grid-area: 1 / 1; }
`;
const Scene = styled.svg`width: 100%; height: 100%; min-height: 0;`;
const HeadsUp = styled.div`display: flex; align-items: center; align-self: start; justify-self: center; gap: 4px; padding: 3px 4px 0 0; opacity: .85;`;
const DocButtons = styled.div`display: flex; align-self: start; justify-self: end; gap: 4px; padding: 3px 8px 0 0; button { color: #999; }`;
const TaskPane = styled.nav`align-self: start; justify-self: end; margin-top: 50px; border-top: 1px solid ${line};`;
const TaskButton = styled.button<{ $on?: boolean }>`
  display: flex; align-items: center; justify-content: center; width: 25px; height: 24px;
  border-left: 1px solid ${line}; border-bottom: 1px solid ${line}; background: ${p => (p.$on ? face : tabFace)};
`;

/* ---------- bottom ---------- */

const SheetRow = styled.div`display: flex; flex: none; height: 15px; padding-left: 27px; border-top: 1px solid ${line};`;
const SheetNav = styled.div`
  display: flex; width: 64px; border: 1px solid #777; background: #a8a8a8;
  button { display: flex; flex: 1; align-items: center; justify-content: center; border-right: 1px solid #8c8c8c; }
`;
const SheetTab = styled.button<{ $w: number; $on?: boolean }>`
  width: ${p => p.$w}px; padding: 0 0 2px 10px; line-height: 12px; text-align: left; border-right: 1px solid ${line};
  background: ${p => (p.$on ? face : tabFace)};
  ${p => p.$on && css`padding-left: 14px; font-weight: 700;`}
`;
const FilterBar = styled.div`display: flex; align-items: center; flex: none; gap: 6px; height: 34px; padding: 2px 0 0 3px; border-bottom: 1px solid ${line};`;
const Status = styled.footer`display: flex; align-items: center; flex: none; height: 20px; padding-left: 1px; border-bottom: 1px solid #e4e4e4; line-height: 18px;`;
const StatusCell = styled.span<{ $w: number; $auto?: boolean }>`
  width: ${p => p.$w}px; text-align: center; white-space: nowrap; border-right: 1px solid #ccc; ${p => p.$auto && css`margin-left: auto;`}
`;
const Units = styled.button`width: 84px; padding-left: 14px; line-height: 18px; text-align: center;`;
const Tray = styled.div`display: flex; justify-content: flex-end; width: 85px;`;

/* ---------- data ---------- */

const ribbonA = [
  ['appearance', 'Edit\nAppearance', 61], ['copyAppearance', 'Copy\nAppearance', 61, true], ['pasteAppearance', 'Paste\nAppearance', 61, true],
  ['scene', 'Edit\nScene', 30], ['decal', 'Edit\nDecal', 28], ['target', 'Display\nStates\nTarget', 37],
] as const;
const ribbonB = [
  ['integrated', 'Integrated\nPreview', 54], ['previewWin', 'Preview\nWindow', 44], ['blueBall', 'Final\nRender', 37],
  ['region', 'Render\nRegion', 37], ['proof', 'Scene\nIllumination\nProof Sheet', 62], ['options', 'Options', 42],
  ['schedule', 'Schedule\nRender', 47], ['recall', 'Recall\nLast\nRender', 37],
] as const;
const tree: { icon: string; text: string; open?: boolean; state?: string; solid?: boolean }[] = [
  { icon: 'history', text: 'History', open: true }, { icon: 'sensors', text: 'Sensors' },
  { icon: 'annotations', text: 'Anotaciones', open: true }, { icon: 'equations', text: 'Ecuaciones' },
  { icon: 'plane', text: 'Alzado', state: 'plane' }, { icon: 'plane', text: 'Planta', state: 'plane' },
  { icon: 'plane', text: 'Vista lateral', state: 'plane' }, { icon: 'origin', text: 'Origen', state: 'origin' },
  { icon: 'partGrey', text: 'MeVfractalPentagon<1>  (Predeterm', state: 'partGrey', solid: true },
  { icon: 'part', text: '1escalado2<1>  (Predeterminado<<P', open: true, state: 'part', solid: true },
  { icon: 'mates', text: 'Relaciones de posición', open: true },
];
const selectionFilters = [
  'fPoint', 'fEdge', 'fFace', 'fSurf', 'fBody', 'fAxis', 'fPlane', 'fSketchPt', 'fSketch', 'fSeg', 'fMid', 'fCenter', 'fCline',
  'fDim', 'fFinish', 'fTol', 'fNote', 'fDatum', 'fWeld', 'fBead', 'fDatumT', 'fThread', 'fBlock', 'fCog', 'fConn', 'fRoute',
];
const faces = [
  ['#9da1b8', '1047,142 829,202 646,452 751,545 999,355'],
  ['#f4fcff', '1047,142 1342,196 1476,441 1263,539 999,355'],
  ['#9498b0', '999,355 1263,539 1180,844 862,848 751,545'],
  ['#808598', '1476,441 1523,686 1340,935 1180,844 1263,539'],
  ['#3f414a', '646,452 751,545 862,848 828,942 693,697'],
  ['#404249', '862,848 1180,844 1340,935 1122,995 828,942'],
];

const RibbonItem = ({ item }: { item: readonly [string, string, number, boolean?] }) => (
  <RibbonButton $w={item[2]} disabled={item[3]}><Icon name={item[0]} />{item[1]}</RibbonButton>
);
const TB = ({ name, w, size }: { name: string; w?: number; size?: number }) => (
  <ToolButton $w={w} aria-label={name}><Icon name={name} size={size} /></ToolButton>
);

export default function App() {
  return (
    <Page>
      <GlobalStyle />
      <TitleBar>
        <Logo>
          <svg width="28" height="30" viewBox="0 0 28 30" fill="none" stroke="#dc2a20" strokeWidth="2.200">
            <path d="M10 3.500c5-2.500 10-2 9 1.500-.7 2.800-4 5-8 7.500" />
            <path d="M9.500 12.500c6 0 8 2 6 6-2 4-7 7.500-14 8.500l6.500-12" />
            <path d="M27 12c-5-.8-8 .5-7.500 3 .6 2.600 5.500 3 5 6.500-.5 3-4 4-9 3.500" />
          </svg>
          <LogoText><b>SOLID</b>WORKS</LogoText>
        </Logo>
        <Menu>
          {['File', 'Edit', 'View', 'Insert', 'Tools', 'PhotoView 360', 'Window', 'Help'].map(m => <button key={m}>{m}</button>)}
          <TB name="pin" w={18} size={14} />
        </Menu>
        <DividerBar />
        <Group>
          {['newDoc', 'open', 'save', 'print', 'undo'].map(n => <Group key={n}><TB name={n} size={20} /><Arrow aria-label={`${n} menu`} /></Group>)}
          <SelectBox $h={26}><TB name="cursor" w={24} /><Arrow $w={13} aria-label="Select menu" /></SelectBox>
          <Group $gap={4}><TB name="traffic" size={18} /><TB name="list" size={18} /><TB name="gear" size={18} /></Group>
          <Arrow aria-label="Options menu" />
        </Group>
        <DocTitle>ParaNivel2.SLDASM *</DocTitle>
        <Search>
          <Icon name="bubbles" size={15} />
          <SearchInput aria-label="Search Community Forum" placeholder="Search Community Forum" />
          <TB name="magnifier" w={24} />
          <Arrow $w={12} $color="#777" aria-label="Search scope" />
        </Search>
        <Help>?</Help>
        <Arrow aria-label="Help menu" />
        <WinButtons><TB name="minimize" /><TB name="restore" /><TB name="close" /></WinButtons>
      </TitleBar>

      <RibbonRow>
        <Ribbon>
          {ribbonA.map(i => <RibbonItem key={i[0]} item={i} />)}
          <RibbonRule />
          {ribbonB.map(i => <RibbonItem key={i[0]} item={i} />)}
        </Ribbon>
        <SideTools>
          <Grip />
          <Group>{['camera', 'video', 'videoOff'].map(n => <TB key={n} name={n} w={27} />)}</Group>
          <Rule $h={31} /><Grip />
          <Group $gap={3}>
            <Group>{['al1', 'al2', 'al3', 'al4'].map(n => <TB key={n} name={n} w={27} size={18} />)}</Group>
            <Rule />
            <Group>{['al5', 'al6', 'al7', 'al8'].map(n => <TB key={n} name={n} w={27} size={18} />)}</Group>
            <TB name="more" size={14} />
          </Group>
        </SideTools>
      </RibbonRow>

      <Main>
        <Side>
          <Tabs>
            <Tab $w={68}>Assembly</Tab><Tab $w={57}>Layout</Tab><Tab $w={57}>Sketch</Tab><Tab $w={61}>Evaluate</Tab>
            <Tab $w={89} $on>Render Tools</Tab><Tab $w={134}>SOLIDWORKS Add-Ins</Tab><Tab $w={118}>SOLIDWORKS MBD</Tab>
          </Tabs>
          <Panel>
            <PanelGrip><Knob /></PanelGrip>
            <PanelTabs>
              <PanelTab $on aria-label="Tree"><Icon name="asm" size={18} /></PanelTab>
              {['props', 'config', 'cross', 'ball'].map(n => <PanelTab key={n} aria-label={n}><Icon name={n} size={18} /></PanelTab>)}
              <StateHeads>
                <TB name="chevronLeft" w={24} size={14} /><TB name="eyeOff" w={25} size={18} /><TB name="cube" w={25} size={18} />
                <TB name="appearance" w={25} /><TB name="ghost" w={23} size={18} />
              </StateHeads>
            </PanelTabs>
            <PanelBody>
              <TreeArea>
                <FilterBox><Icon name="filter" size={18} /><Arrow $w={7} aria-label="Filter menu" /><FilterInput aria-label="Filter tree" /></FilterBox>
                <Tree>
                  <TreeRow $root><Icon name="asm" size={18} />ParaNivel2  (Predeterminado&lt;Estado de v</TreeRow>
                  {tree.map(t => (
                    <TreeRow key={t.text}><Expander $open={!!t.open} aria-label="Expand" /><Icon name={t.icon} size={18} />{t.text}</TreeRow>
                  ))}
                </Tree>
                <HScroll><TB name="chevronLeft" w={16} size={12} /><Thumb /><TB name="chevronRight" w={16} size={12} /></HScroll>
              </TreeArea>
              <StateCol $w={28}><li />{tree.map(t => <li key={t.text}>{t.state && <Icon name={t.state} size={18} />}</li>)}</StateCol>
              <StateCol $w={24}><li />{tree.map(t => <li key={t.text}>{t.solid && <Icon name="dispCube" size={16} />}</li>)}</StateCol>
              <StateCol $w={24}><li />{tree.map(t => <li key={t.text}>{t.solid && <Icon name="corner" />}</li>)}</StateCol>
              <StateCol $w={26} />
            </PanelBody>
          </Panel>
          <SplitHandle aria-label="Collapse panel"><Knob /></SplitHandle>
        </Side>

        <Viewport>
          <Scene viewBox="343 118 1577 893">
            <Defs />
            <g stroke="#000" strokeWidth="1.200" strokeLinejoin="round">
              {faces.map(([fill, points]) => <polygon key={points} fill={fill} points={points} />)}
            </g>
            <path d="M382 953V930" stroke="#1c6e1c" strokeWidth="3" />
            <path d="M382 923l4.500 10h-9z" fill="#1c7a1c" />
            <path d="M382 953h24" stroke="#e02020" strokeWidth="3" />
            <path d="M413 953l-10 4.500v-9z" fill="#d81414" />
            <circle cx="379" cy="956" r="4.500" fill="#10108c" />
            <g fontFamily="Liberation Sans, sans-serif" fontSize="11">
              <text x="378" y="921" fill="#1c9a1c">Y</text>
              <text x="412" y="956" fill="#f01818">X</text>
              <text x="373" y="962" fill="#1818e0">z</text>
            </g>
          </Scene>
          <HeadsUp>
            {['zoomFit', 'zoomArea', 'prevView', 'section', 'annView'].map(n => <TB key={n} name={n} size={20} />)}
            {['orient', 'display', 'eye'].map(n => <Group key={n}><TB name={n} size={18} /><Arrow $w={14} $color="#888" aria-label={`${n} menu`} /></Group>)}
            <TB name="appearance" />
            {['sceneBall', 'monitor'].map(n => <Group key={n}><TB name={n} size={18} /><Arrow $w={14} $color="#888" aria-label={`${n} menu`} /></Group>)}
          </HeadsUp>
          <DocButtons><TB name="dockLeft" /><TB name="dockRight" /><TB name="minimize" /><TB name="restore" /><TB name="close" /></DocButtons>
          <TaskPane>
            {['home', 'books', 'folderOpen', 'palette', 'sphere', 'props'].map(n => (
              <TaskButton key={n} $on={n === 'sphere'} aria-label={n}><Icon name={n} size={18} /></TaskButton>
            ))}
          </TaskPane>
        </Viewport>
      </Main>

      <SheetRow>
        <SheetNav>{['first', 'back', 'forward', 'last'].map(n => <button key={n} aria-label={n}><Icon name={n} size={12} /></button>)}</SheetNav>
        <SheetTab $w={58} $on>Model</SheetTab><SheetTab $w={68}>3D Views</SheetTab><SheetTab $w={108}>Motion Study 1</SheetTab>
      </SheetRow>
      <FilterBar>
        <Grip />
        <Group>
          <TB name="filterOne" w={27} size={18} /><TB name="filterMany" w={27} /><TB name="filterOn" w={27} />
          <SelectBox $h={26}><TB name="cursor" w={27} /><Arrow $w={14} aria-label="Select menu" /></SelectBox>
          <TB name="cursorOff" w={24} />
        </Group>
        <Rule />
        <Group>{selectionFilters.map(n => <TB key={n} name={n} w={27} size={20} />)}</Group>
        <Rule $h={32} />
      </FilterBar>
      <Status>
        SOLIDWORKS Premium 2017 x64 Edition
        <StatusCell $w={82} $auto>Fully Defined</StatusCell>
        <StatusCell $w={8}>&nbsp;</StatusCell>
        <StatusCell $w={101}>Editing Assembly</StatusCell>
        <StatusCell $w={16}>&nbsp;</StatusCell>
        <Units>MMGS</Units>
        <Arrow $w={8} $up aria-label="Unit system" />
        <Tray><TB name="tag" size={16} /></Tray>
      </Status>
    </Page>
  );
}
